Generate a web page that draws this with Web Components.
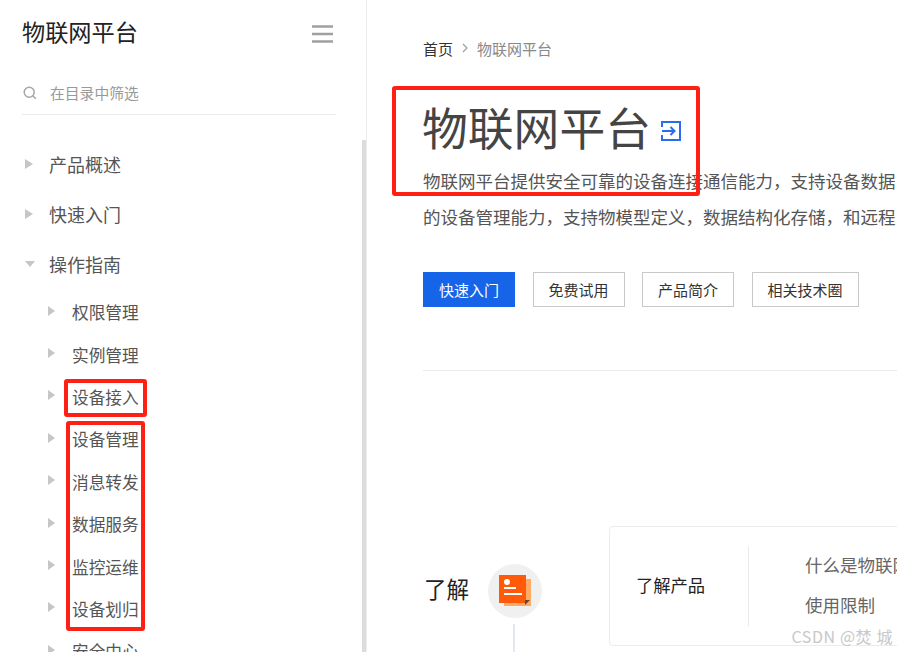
<!DOCTYPE html>
<html lang="zh">
<head>
<meta charset="utf-8">
<title>物联网平台</title>
<style>
  html, body { margin: 0; height: 100%; overflow: hidden; background: #fff; }
  body { font-family: "Noto Sans CJK SC", "Liberation Sans", sans-serif; }
</style>
</head>
<body>
<doc-page>
  <doc-sidebar heading="物联网平台">
    <nav-item label="产品概述"></nav-item>
    <nav-item label="快速入门"></nav-item>
    <nav-item label="操作指南" open></nav-item>
    <nav-item label="权限管理" sub></nav-item>
    <nav-item label="实例管理" sub></nav-item>
    <nav-item label="设备接入" sub></nav-item>
    <nav-item label="设备管理" sub></nav-item>
    <nav-item label="消息转发" sub></nav-item>
    <nav-item label="数据服务" sub></nav-item>
    <nav-item label="监控运维" sub></nav-item>
    <nav-item label="设备划归" sub></nav-item>
    <nav-item label="安全中心" sub></nav-item>
  </doc-sidebar>
  <doc-main>
    <doc-crumbs slot="crumbs" current="物联网平台">首页</doc-crumbs>
    <doc-title slot="title">物联网平台</doc-title>
    <div slot="desc">物联网平台提供安全可靠的设备连接通信能力，支持设备数据</div>
    <div slot="desc">的设备管理能力，支持物模型定义，数据结构化存储，和远程</div>
    <doc-button slot="actions" primary>快速入门</doc-button>
    <doc-button slot="actions">免费试用</doc-button>
    <doc-button slot="actions">产品简介</doc-button>
    <doc-button slot="actions" wide>相关技术圈</doc-button>
    <learn-section slot="learn" name="了解" card="了解产品">
      <span>什么是物联网平台</span>
      <span>使用限制</span>
    </learn-section>
  </doc-main>
  <red-mark style="left:392px;top:86px;width:308px;height:110px"></red-mark>
  <red-mark style="left:64px;top:379px;width:83px;height:38px"></red-mark>
  <red-mark style="left:66px;top:421px;width:79px;height:210px"></red-mark>
  <water-mark>CSDN @焚 城</water-mark>
</doc-page>

<script>
// 페이지 전체 틀
class DocPage extends HTMLElement {
  constructor() {
    super();
    this.attachShadow({ mode: 'open' });
    this.shadowRoot.innerHTML = `
      <style>
        :host { display: flex; position: relative; width: 897px; height: 652px; overflow: hidden; }
      </style>
      <slot></slot>
    `;
  }
}
customElements.define('doc-page', DocPage);

// 왼쪽 목록
class DocSidebar extends HTMLElement {
  constructor() {
    super();
    this.attachShadow({ mode: 'open' });
    this.shadowRoot.innerHTML = `
      <style>
        :host { display: flex; flex: none; width: 367px; height: 652px; box-sizing: border-box; position: relative; overflow: hidden; border-right: 1px solid #ededed; }
        .inner { flex: 1; padding: 0 26px 0 22px; min-width: 0; }
        .head { display: flex; align-items: center; justify-content: space-between; height: 33px; margin-top: 15px; padding-right: 3px; }
        .head svg { margin-top: 4px; }
        h1 { margin: 0; font-size: 23.2px; line-height: 33px; font-weight: 400; color: #222; }
        .search { display: flex; align-items: center; gap: 13px; height: 33px; margin-top: 28px; padding-bottom: 5px; border-bottom: 1px solid #e9e9e9; color: #999; font-size: 14.8px; }
        .search svg { margin-left: 1px; }
        .list { padding-top: 24px; }
        .track { flex: none; width: 4px; margin-top: 140px; background: #dcdcdc; }
      </style>
      <div class="inner">
        <div class="head">
          <h1></h1>
          <svg width="21" height="18" viewBox="0 0 21 18"><path d="M0 1.5h21M0 9h21M0 16.5h21" stroke="#a0a0a0" stroke-width="2.4"/></svg>
        </div>
        <div class="search">
          <svg width="14" height="14" viewBox="0 0 14 14" fill="none" stroke="#a6a6a6" stroke-width="1.5"><circle cx="6.2" cy="6.2" r="5"/><path d="M9.8 9.8l3 3"/></svg>
          <span>在目录中筛选</span>
        </div>
        <div class="list"><slot></slot></div>
      </div>
      <div class="track"></div>
    `;
    this.shadowRoot.querySelector('h1').textContent = this.getAttribute('heading');
  }
}
customElements.define('doc-sidebar', DocSidebar);

// 목록 한 줄
class NavItem extends HTMLElement {
  constructor() {
    super();
    this.attachShadow({ mode: 'open' });
    this.shadowRoot.innerHTML = `
      <style>
        :host { display: flex; align-items: center; height: 50px; color: #555; font-size: 18px; padding-left: 3px; }
        :host([sub]) { height: 42.4px; font-size: 16.67px; padding-left: 26px; }
        :host([open]) { margin-bottom: 2px; }
        .arrow { flex: none; width: 0; height: 0; margin-right: 16px; margin-top: -1px; border-style: solid; border-color: transparent transparent transparent #c4c6ca; border-width: 5.5px 0 5.5px 8px; }
        :host([sub]) .arrow { margin-right: 17px; margin-top: -3px; border-width: 5.5px 0 5.5px 7px; }
        :host([open]) .arrow { border-width: 6px 5px 0 5px; border-color: #c4c6ca transparent transparent transparent; margin-right: 14px; }
      </style>
      <span class="arrow"></span><span class="text"></span>
    `;
    this.shadowRoot.querySelector('.text').textContent = this.getAttribute('label');
  }
}
customElements.define('nav-item', NavItem);

// 오른쪽 본문
class DocMain extends HTMLElement {
  constructor() {
    super();
    this.attachShadow({ mode: 'open' });
    this.shadowRoot.innerHTML = `
      <style>
        :host { display: block; flex: 1; min-width: 0; padding: 38px 0 0 56px; overflow: hidden; }
        .desc { font-size: 17.5px; line-height: 36px; color: #555; white-space: nowrap; margin-top: 6px; }
        .actions { display: flex; gap: 17.5px; margin-top: 37px; }
        hr { border: 0; border-top: 1px solid #e9e9e9; margin: 63px 0 0; }
        .learn { margin-top: 155px; }
      </style>
      <slot name="crumbs"></slot>
      <slot name="title"></slot>
      <div class="desc"><slot name="desc"></slot></div>
      <div class="actions"><slot name="actions"></slot></div>
      <hr>
      <div class="learn"><slot name="learn"></slot></div>
    `;
  }
}
customElements.define('doc-main', DocMain);

// 경로 표시
class DocCrumbs extends HTMLElement {
  constructor() {
    super();
    this.attachShadow({ mode: 'open' });
    this.shadowRoot.innerHTML = `
      <style>
        :host { display: flex; align-items: center; height: 20px; font-size: 15px; color: #333; }
        svg { margin: 0 9px; }
        .cur { color: #888; }
      </style>
      <slot></slot>
      <svg width="6" height="10" viewBox="0 0 6 10" fill="none" stroke="#999" stroke-width="1.1"><path d="M1 1l4 4-4 4"/></svg>
      <span class="cur"></span>
    `;
    this.shadowRoot.querySelector('.cur').textContent = this.getAttribute('current');
  }
}
customElements.define('doc-crumbs', DocCrumbs);

// 큰 제목 + 파란 아이콘
class DocTitle extends HTMLElement {
  constructor() {
    super();
    this.attachShadow({ mode: 'open' });
    this.shadowRoot.innerHTML = `
      <style>
        :host { display: flex; align-items: center; height: 62px; margin-top: 37px; margin-left: -1px; font-size: 45.8px; color: #444; }
        svg { margin: 9px 0 0 10px; }
      </style>
      <slot></slot>
      <svg width="20" height="20" viewBox="0 0 20 20" fill="none" stroke="#2a6cf0" stroke-width="2"><path d="M1 6V1h18v18H1v-5"/><path d="M1 10h12M9.5 6l4 4-4 4"/></svg>
    `;
  }
}
customElements.define('doc-title', DocTitle);

// 버튼
class DocButton extends HTMLElement {
  constructor() {
    super();
    this.attachShadow({ mode: 'open' });
    this.shadowRoot.innerHTML = `
      <style>
        :host { display: flex; align-items: center; justify-content: center; box-sizing: border-box; width: 92px; height: 35px; border: 1px solid #c9c9c9; font-size: 15px; color: #333; }
        :host([primary]) { background: #1664e8; border-color: #1664e8; color: #fff; }
        :host([wide]) { width: 107px; }
      </style>
      <slot></slot>
    `;
  }
}
customElements.define('doc-button', DocButton);

// 了解 영역
class LearnSection extends HTMLElement {
  constructor() {
    super();
    this.attachShadow({ mode: 'open' });
    this.shadowRoot.innerHTML = `
      <style>
        :host { display: flex; align-items: flex-start; width: 700px; }
        .side { flex: none; width: 185px; display: flex; align-items: center; gap: 19px; margin-top: 38px; margin-left: 1px; position: relative; font-size: 22.5px; color: #222; }
        .title { margin-bottom: 6px; }
        .circle { flex: none; width: 54px; height: 54px; border-radius: 50%; background: #f0f0f0; display: flex; align-items: center; justify-content: center; }
        .line { position: absolute; left: 89px; top: 60px; width: 2px; height: 40px; background: #e3e8ee; }
        .card { flex: none; width: 500px; height: 120px; box-sizing: border-box; border: 1px solid #ececec; border-radius: 4px; display: flex; align-items: center; padding: 19px 0; }
        .name { flex: none; width: 138px; box-sizing: border-box; padding: 0 0 4px 26px; font-size: 17.3px; color: #222; }
        .sep { flex: none; width: 1px; align-self: stretch; background: #e9e9e9; margin-right: 56px; }
        .links { display: flex; flex-direction: column; gap: 14px; font-size: 17.5px; line-height: 26px; color: #666; white-space: nowrap; margin-top: -2px; }
        ::slotted(span) { display: block; }
      </style>
      <div class="side">
        <span class="title"></span>
        <span class="circle">
          <svg width="32" height="32" viewBox="0 0 32 32">
            <path d="M5 4h27v27H5z" fill="#ffab66"/>
            <path d="M0 0h27v28H0z" fill="#ff5a0a"/>
            <path d="M26 30l5-5h-5z" fill="#5a4a40"/>
            <circle cx="8" cy="7" r="3" fill="#fff"/>
            <path d="M5 12h12v2H5zM5 18h18v2H5z" fill="#fff"/>
          </svg>
        </span>
        <span class="line"></span>
      </div>
      <div class="card">
        <div class="name"></div>
        <div class="sep"></div>
        <div class="links"><slot></slot></div>
      </div>
    `;
    this.shadowRoot.querySelector('.title').textContent = this.getAttribute('name');
    this.shadowRoot.querySelector('.name').textContent = this.getAttribute('card');
  }
}
customElements.define('learn-section', LearnSection);

// 빨간 표시 상자 (위에 덮는 것)
class RedMark extends HTMLElement {
  constructor() {
    super();
    this.attachShadow({ mode: 'open' });
    this.shadowRoot.innerHTML = `
      <style>
        :host { display: block; position: absolute; box-sizing: border-box; border: 4px solid #fe2015; border-radius: 3px; }
      </style>
    `;
  }
}
customElements.define('red-mark', RedMark);

// 워터마크
class WaterMark extends HTMLElement {
  constructor() {
    super();
    this.attachShadow({ mode: 'open' });
    this.shadowRoot.innerHTML = `
      <style>
        :host { display: block; position: absolute; right: 4px; bottom: 5px; font-size: 16px; line-height: 22px; color: #c8c8c8; letter-spacing: 0.6px; white-space: nowrap; }
      </style>
      <slot></slot>
    `;
  }
}
customElements.define('water-mark', WaterMark);
</script>
</body>
</html>
